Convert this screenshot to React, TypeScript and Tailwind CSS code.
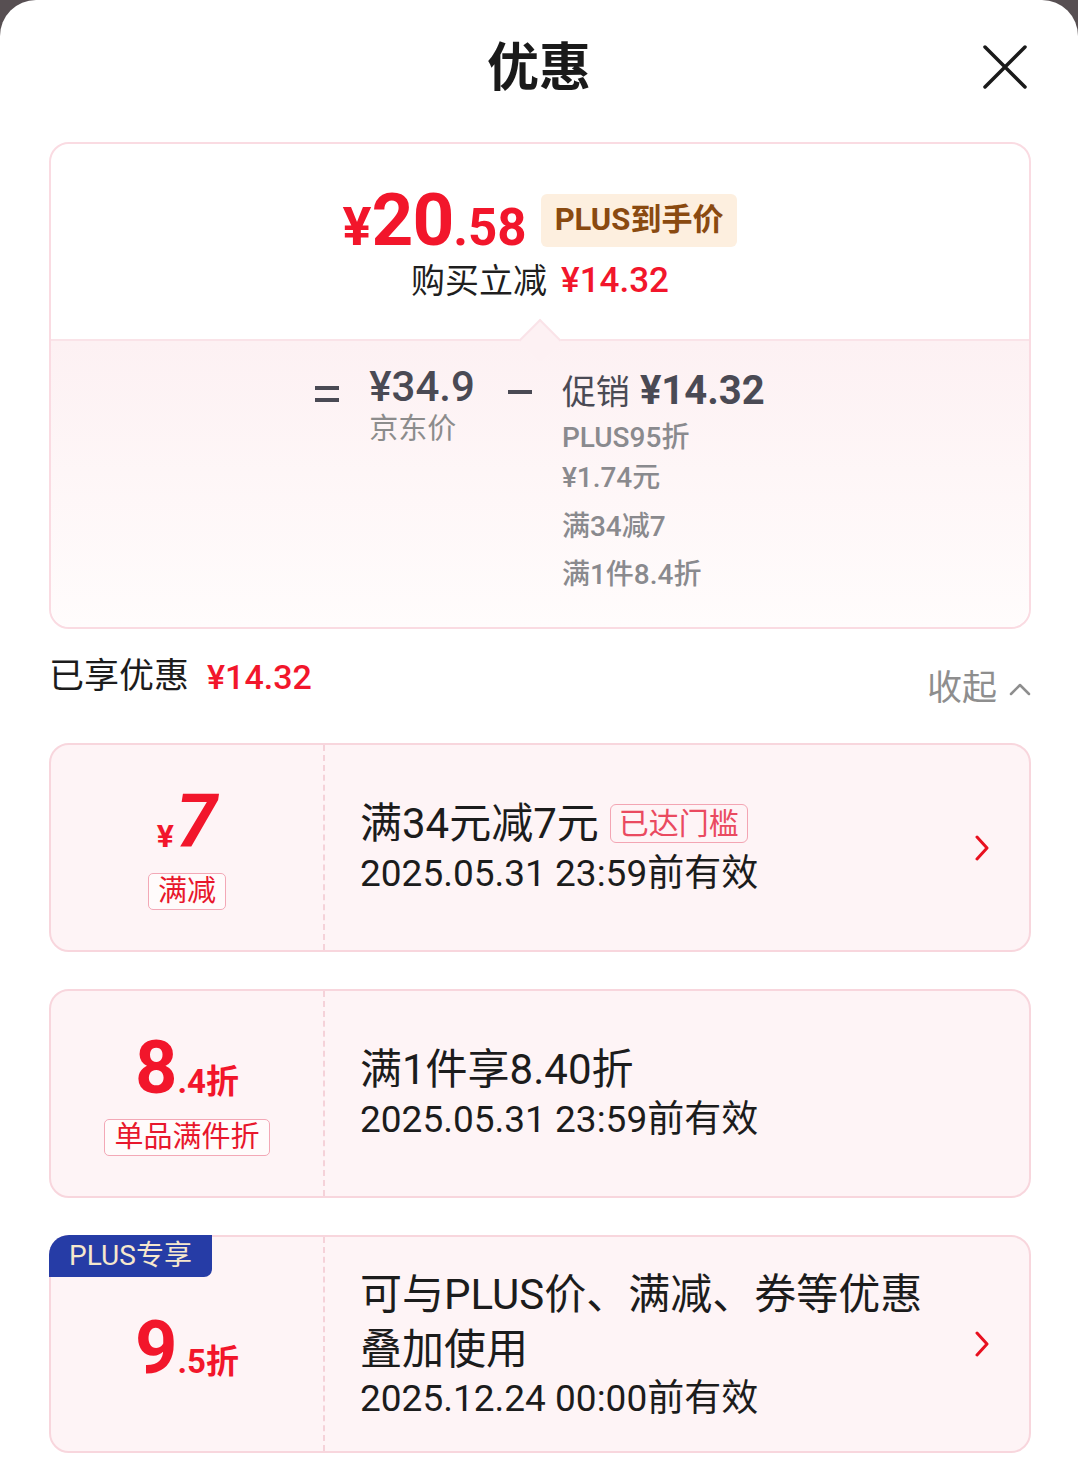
import React from "react"

const red = "text-[#f2162b]"

function ChevronRight() {
  return (
    <svg width="14" height="26" viewBox="0 0 14 26" fill="none">
      <path d="M2 2 L12 13 L2 24" stroke="#e8101f" strokeWidth="3" strokeLinecap="round" strokeLinejoin="round" />
    </svg>
  )
}

function Tag({ children }: { children: React.ReactNode }) {
  return (
    <span className="mt-[14px] inline-flex h-[37px] items-center rounded-[5px] border-[1.5px] border-[#f3a8b6] bg-white/60 px-[9px] text-[29px] leading-none text-[#e8172c]">
      {children}
    </span>
  )
}

function Coupon({
  left,
  children,
  arrow,
  plus,
}: {
  left: React.ReactNode
  children: React.ReactNode
  arrow?: boolean
  plus?: boolean
}) {
  return (
    <div className="relative flex min-h-[209px] rounded-[20px] border-2 border-[#f8d6dd] bg-[#fef4f6]">
      {plus && (
        <span className="absolute -left-[2px] -top-[2px] flex h-[42px] w-[163px] items-center justify-center rounded-tl-[20px] rounded-br-[8px] bg-[#263ca6] text-[28px] text-[#f6e8cd]">
          PLUS专享
        </span>
      )}
      <div className="flex w-[274px] shrink-0 flex-col items-center justify-center border-r-2 border-dashed border-[#f5d2d9]">
        {left}
      </div>
      <div className="flex flex-1 items-center justify-between py-[30px] pl-[35px] pr-[40px]">
        <div className="text-[#1c1c1c]">{children}</div>
        {arrow && <ChevronRight />}
      </div>
    </div>
  )
}

export default function App() {
  return (
    <div className="min-h-[1475px] bg-[#574f52] font-['Roboto','Noto_Sans_CJK_SC',sans-serif]">
      <div className="min-h-[1475px] rounded-t-[36px] bg-white pb-8">
        {/* header */}
        <div className="relative flex h-[138px] items-center justify-center">
          <h1 className="text-[52px] font-bold text-[#1a1a1a]">优惠</h1>
          <svg className="absolute right-[51px] top-[45px]" width="44" height="44" viewBox="0 0 44 44">
            <path d="M2 2 L42 42 M42 2 L2 42" stroke="#1a1a1a" strokeWidth="3.5" strokeLinecap="round" />
          </svg>
        </div>

        {/* price summary */}
        <div className="ml-[49px] mr-[47px] mt-[4px] rounded-[20px] border-2 border-[#fadbe2]">
          <div className="relative flex h-[197px] flex-col items-center justify-center rounded-t-[20px] border-b-2 border-[#fae3e8] bg-white pt-[4px]">
            <div className="flex items-center gap-[14px]">
              <div className={`flex items-baseline font-bold leading-none ${red}`}>
                <span className="text-[54px]">¥</span>
                <span className="text-[73px] tracking-[-1px]">20</span>
                <span className="text-[51px]">.58</span>
              </div>
              <span className="flex h-[53px] items-center rounded-[6px] bg-[#fdefdf] px-[14px] text-[31px] font-bold text-[#8a4a10]">
                PLUS到手价
              </span>
            </div>
            <div className="mt-[2px] flex items-center gap-[14px] leading-[44px] text-[#1f1f1f]">
              <span className="text-[34px]">购买立减</span>
              <span className={`text-[35px] font-medium ${red}`}>¥14.32</span>
            </div>
            <span className="absolute bottom-[-16px] left-1/2 h-[30px] w-[30px] -translate-x-1/2 rotate-45 border-l-2 border-t-2 border-[#fae3e8] bg-[#fdf1f3]" />
          </div>
          <div className="flex justify-center rounded-b-[20px] bg-gradient-to-b from-[#fdf1f3] to-[#fffcfc] pb-[32px] pt-[24px] text-[#4a4a54]">
            <div className="mt-[21px] flex w-[24px] flex-col gap-[8px]">
              <span className="h-[4px] bg-[#4a4a54]" />
              <span className="h-[4px] bg-[#4a4a54]" />
            </div>
            <div className="ml-[30px] flex flex-col">
              <span className="text-[42px] font-medium leading-[44px]">¥34.9</span>
              <span className="text-[29px] leading-[40px] text-[#8c8c8c]">京东价</span>
            </div>
            <span className="ml-[33px] mt-[25px] h-[4px] w-[24px] bg-[#4a4a54]" />
            <div className="ml-[30px] flex flex-col text-[#8a8a8e]">
              <div className="flex items-baseline gap-[10px] leading-[52px] text-[#4a4a54]">
                <span className="text-[34px]">促销</span>
                <span className="text-[40px] font-bold">¥14.32</span>
              </div>
              <span className="text-[28px] font-medium leading-[40px]">PLUS95折</span>
              <span className="text-[28px] font-medium leading-[40px]">¥1.74元</span>
              <span className="mt-[9px] text-[28px] font-medium leading-[40px]">满34减7</span>
              <span className="mt-[8px] text-[28px] font-medium leading-[40px]">满1件8.4折</span>
            </div>
          </div>
        </div>

        {/* enjoyed */}
        <div className="ml-[49px] mr-[47px] mt-[26px] flex items-start justify-between">
          <div className="flex items-center gap-[18px] leading-[44px]">
            <span className="text-[35px] text-[#1c1c1c]">已享优惠</span>
            <span className={`text-[34px] font-medium ${red}`}>¥14.32</span>
          </div>
          <div className="mt-[12px] flex items-center gap-[12px] text-[35px] leading-[44px] text-[#8e8e8e]">
            <span>收起</span>
            <svg width="22" height="14" viewBox="0 0 22 14" fill="none">
              <path d="M2 12 L11 3 L20 12" stroke="#8e8e8e" strokeWidth="2.5" strokeLinecap="round" strokeLinejoin="round" />
            </svg>
          </div>
        </div>

        <div className="ml-[49px] mr-[47px] mt-[32px] flex flex-col gap-[37px]">
          <Coupon
            arrow
            left={
              <>
                <div className={`flex items-baseline font-bold leading-none ${red}`}>
                  <span className="text-[32px]">¥</span>
                  <span className="ml-[2px] text-[74px] italic">7</span>
                </div>
                <Tag>满减</Tag>
              </>
            }
          >
            <div className="flex items-center gap-[11px] leading-[52px]">
              <span className="text-[42px]">满34元减7元</span>
              <span className="flex h-[39px] items-center rounded-[6px] border-[1.5px] border-[#f3a5b3] px-[8px] text-[30px] leading-none text-[#ea4a60]">
                已达门槛
              </span>
            </div>
            <div className="text-[37px] leading-[48px]">2025.05.31 23:59前有效</div>
          </Coupon>

          <Coupon
            left={
              <>
                <div className={`flex items-baseline font-bold leading-none ${red}`}>
                  <span className="text-[74px]">8</span>
                  <span className="text-[33px]">.4折</span>
                </div>
                <Tag>单品满件折</Tag>
              </>
            }
          >
            <div className="text-[42px] leading-[52px]">满1件享8.40折</div>
            <div className="text-[37px] leading-[48px]">2025.05.31 23:59前有效</div>
          </Coupon>

          <Coupon
            arrow
            plus
            left={
              <div className={`mt-[8px] flex items-baseline font-bold leading-none ${red}`}>
                <span className="text-[74px]">9</span>
                <span className="text-[33px]">.5折</span>
              </div>
            }
          >
            <div className="text-[42px] leading-[55px]">可与PLUS价、满减、券等优惠</div>
            <div className="text-[42px] leading-[55px]">叠加使用</div>
            <div className="text-[37px] leading-[44px]">2025.12.24 00:00前有效</div>
          </Coupon>
        </div>
      </div>
    </div>
  )
}
